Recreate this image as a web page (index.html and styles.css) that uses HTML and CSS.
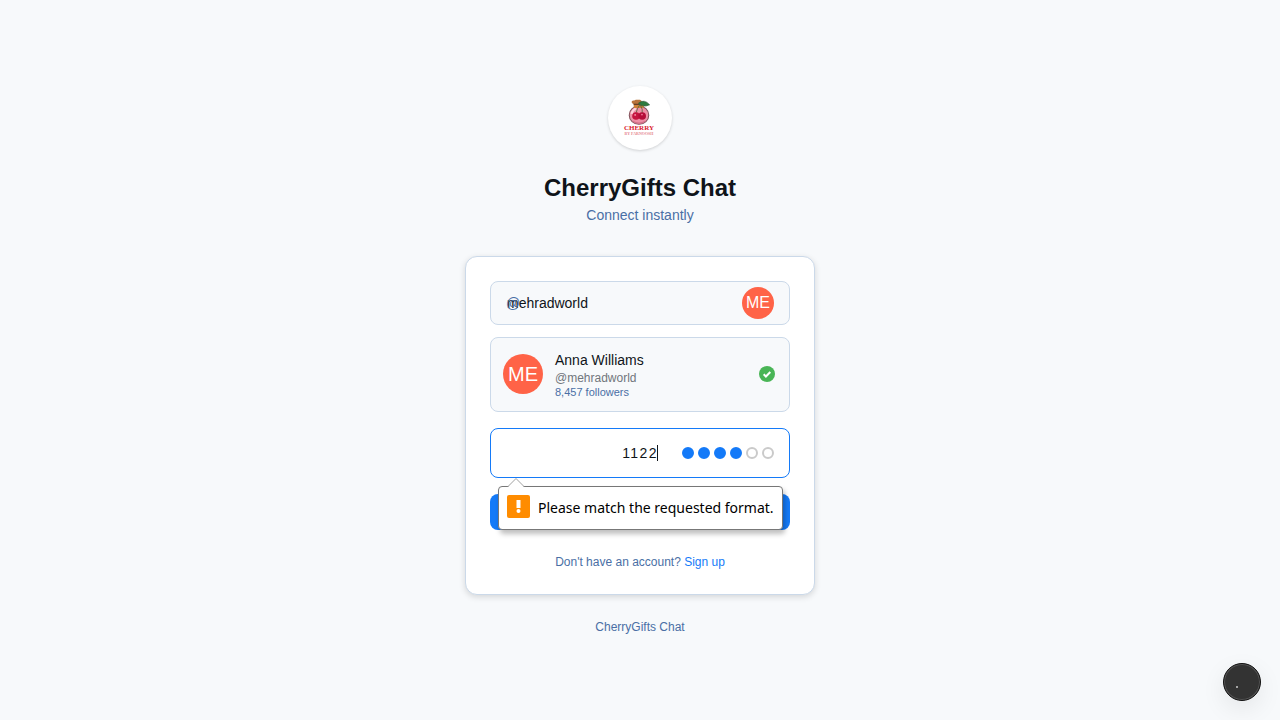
FILE: index.html
```html
<!DOCTYPE html>
<html lang="en">
<head>
<meta charset="utf-8">
<meta name="viewport" content="width=device-width, initial-scale=1">
<title>CherryGifts Chat</title>
<link rel="stylesheet" href="styles.css">
</head>
<body>
<main class="page">
  <header class="brand">
    <div class="logo">
      <svg class="logo-art" viewBox="-1 0 28 24.5" aria-hidden="true">
        <ellipse cx="13" cy="15.200" rx="9.200" ry="8.600" fill="#ee8fa5" stroke="#80515a" stroke-width="1"/>
        <path d="M6 14a7 7 0 0 1 4-5" fill="none" stroke="#fbd3dc" stroke-width="2"/>
        <rect x="8" y="4.500" width="9.500" height="4" rx="1" fill="#cf8136"/>
        <path d="M6 3q0-2 2.500-1.500l1.500-.8h4l1.500 1.300v3h-8z" fill="#b8733b"/>
        <path d="M8 5h8" stroke="#513423" stroke-width="1"/>
        <path d="M12.500 4q5.500-4.500 10.500 1.500q-7 3-10.500-1.500z" fill="#2d7b3e" stroke="#245331" stroke-width=".6"/>
        <path d="M14 5q-3 4-4 9M14 5q3 5 2 9" fill="none" stroke="#56643d" stroke-width=".8"/>
        <circle cx="10.200" cy="16" r="3.600" fill="#c5133f"/>
        <circle cx="16" cy="16" r="3.600" fill="#b50d38"/>
        <circle cx="9.400" cy="15" r=".9" fill="#f58ba3"/>
        <circle cx="15.800" cy="14.700" r=".9" fill="#ed7190"/>
        <path d="M7 21q6 3.500 12 0" fill="none" stroke="#d4708a" stroke-width="1"/>
      </svg>
      <span class="logo-name">CHERRY</span>
      <span class="logo-tag">BY FARNOOSH</span>
    </div>
    <h1 class="title">CherryGifts Chat</h1>
    <p class="subtitle">Connect instantly</p>
  </header>

  <form class="card" novalidate>
    <div class="field username">
      <span class="at" aria-hidden="true">@</span>
      <input class="input" type="text" value="mehradworld" aria-label="Username">
      <span class="avatar avatar-small">ME</span>
    </div>
    <section class="profile">
      <span class="avatar">ME</span>
      <div class="details">
        <div class="name">Anna Williams</div>
        <div class="handle">@mehradworld</div>
        <div class="followers">8,457 followers</div>
      </div>
      <svg class="check" viewBox="0 0 16 16" aria-label="Verified" role="img">
        <circle cx="8" cy="8" r="8" fill="#49b556"/>
        <path d="M4.700 8.300l2.200 2.200 4.400-4.500" fill="none" stroke="#fff" stroke-width="2"/>
      </svg>
    </section>
    <div class="field pin">
      <input class="input pin-input" type="text" inputmode="numeric" maxlength="6" value="1122" aria-label="PIN">
      <span class="caret"></span>
      <div class="dots" aria-hidden="true">
        <i class="dot filled"></i><i class="dot filled"></i><i class="dot filled"></i><i class="dot filled"></i><i class="dot"></i><i class="dot"></i>
      </div>
    </div>
    <div class="action">
      <button class="submit" type="button" aria-label="Log in"></button>
      <div class="bubble" role="alert">
        <svg class="bubble-arrow" viewBox="0 0 18 9" aria-hidden="true">
          <path d="M1 9l8-8 8 8z" fill="#fff"/>
          <path d="M1 8.500l8-8 8 8" fill="none" stroke="#a0a0a0"/>
        </svg>
        <svg class="warning" viewBox="0 0 23 23" aria-hidden="true">
          <rect width="23" height="23" rx="2" fill="#ff8c00"/>
          <path d="M9.500 5h4v8h-4z" fill="#fff"/>
          <circle cx="11.500" cy="16" r="2" fill="#fff"/>
        </svg>
        <span>Please match the requested format.</span>
      </div>
    </div>
    <p class="signup">Don't have an account? <a class="link" href="#">Sign up</a></p>
  </form>
  <footer class="footer">CherryGifts Chat</footer>
</main>
<button class="widget" type="button" aria-label="Open widget"><span class="speck"></span></button>
</body>
</html>
```

FILE: styles.css
```css
* { box-sizing: border-box; }
body {
  margin: 0;
  background: #f7f9fb;
  color: #0f1419;
  font-family: "Liberation Sans", Arial, sans-serif;
  font-size: 14px;
}
.page {
  min-height: 100vh;
  display: flex;
  flex-direction: column;
  align-items: center;
  justify-content: center;
}
.brand {
  display: flex;
  flex-direction: column;
  align-items: center;
  margin-bottom: 32px;
}
.logo {
  width: 64px;
  height: 64px;
  margin-bottom: 24px;
  padding: 13px 2px 0 0;
  display: flex;
  flex-direction: column;
  align-items: center;
  border-radius: 50%;
  background: #fff;
  box-shadow: 0 1px 3px rgba(0, 0, 0, 0.16);
}
.logo-art { width: 30px; height: 26px; flex: none; }
.logo-name {
  color: #d9202c;
  font: bold 7px/7px "Liberation Serif", serif;
}
.logo-tag {
  color: #e68990;
  font: bold 4px/3px "Liberation Serif", serif;
}
.title { margin: 0 0 4px; font-size: 24px; line-height: 28px; }
.subtitle { margin: 0; line-height: 18px; color: #4a6fa5; }
.card {
  width: 100%;
  max-width: 350px;
  padding: 24px;
  border: 1px solid #cbd9e9;
  border-radius: 12px;
  background: #fff;
  box-shadow: 0 2px 6px rgba(0, 0, 0, 0.14);
}
.field {
  position: relative;
  display: flex;
  align-items: center;
  justify-content: flex-end;
}
.input {
  width: 100%;
  height: 44px;
  padding: 0 48px 0 16px;
  border: 1px solid #cbd9e9;
  border-radius: 8px;
  outline: none;
  background: #f7f9fb;
  color: #0f1419;
  font: inherit;
}
.username { margin-bottom: 12px; }
.at { position: absolute; left: 16px; color: #4a6fa5; }
.avatar {
  display: flex;
  flex: none;
  align-items: center;
  justify-content: center;
  width: 40px;
  height: 40px;
  border-radius: 50%;
  background: #ff6347;
  color: #fff;
  font-size: 20px;
}
.avatar-small {
  position: absolute;
  right: 16px;
  width: 32px;
  height: 32px;
  font-size: 16px;
  line-height: 20px;
}
.profile {
  display: flex;
  align-items: center;
  gap: 12px;
  margin-bottom: 16px;
  padding: 12px 14px 12px 12px;
  border: 1px solid #cbd9e9;
  border-radius: 8px;
  background: #f7f9fb;
}
.details { flex: 1; }
.name { line-height: 20px; }
.handle { font-size: 12px; line-height: 16px; color: #71767b; }
.followers { font-size: 11px; line-height: 13px; color: #4a6fa5; }
.check { width: 16px; height: 16px; }
.pin { margin-bottom: 16px; }
.pin-input {
  height: 50px;
  padding: 0 16px;
  border-color: #147af8;
  background: #fff;
  text-align: center;
  letter-spacing: 0.1em;
}
.caret {
  position: absolute;
  left: calc(50% + 17px);
  width: 1px;
  height: 16px;
  background: #0f1419;
}
.dots { position: absolute; right: 16px; display: flex; gap: 4px; }
.dot {
  width: 12px;
  height: 12px;
  border: 2px solid #cacaca;
  border-radius: 50%;
}
.filled { border-color: #147af8; background: #147af8; }
.action { position: relative; margin-bottom: 24px; }
.submit {
  display: block;
  width: 100%;
  height: 36px;
  border: 0;
  border-radius: 8px;
  background: #147af8;
}
.bubble {
  position: absolute;
  top: -8px;
  left: 8px;
  display: flex;
  align-items: center;
  gap: 8px;
  height: 44px;
  padding: 0 8px;
  border: 1px solid #777;
  border-radius: 4px;
  background: #fff;
  box-shadow: 2px 4px 5px rgba(0, 0, 0, 0.25);
  color: #000;
  font: 14px/20px "Noto Sans", sans-serif;
  white-space: nowrap;
}
.bubble-arrow { position: absolute; left: 8px; top: -9px; width: 18px; height: 9px; }
.warning { width: 23px; height: 23px; margin-bottom: 3px; }
.signup {
  margin: 0;
  font-size: 12px;
  line-height: 16px;
  text-align: center;
  color: #4a6fa5;
}
.link { color: #147af8; text-decoration: none; }
.footer {
  margin-top: 24px;
  font-size: 12px;
  line-height: 16px;
  color: #4a6fa5;
}
.widget {
  position: fixed;
  right: 19px;
  bottom: 19px;
  width: 38px;
  height: 38px;
  padding: 0;
  border: 1px solid #111;
  border-radius: 50%;
  background: #333;
  box-shadow: inset 0 0 0 1px #555, 0 8px 24px rgba(0, 0, 0, 0.08);
}
.speck {
  position: absolute;
  left: 12px;
  top: 22px;
  width: 2px;
  height: 2px;
  border-radius: 50%;
  background: #ccc;
}
```
